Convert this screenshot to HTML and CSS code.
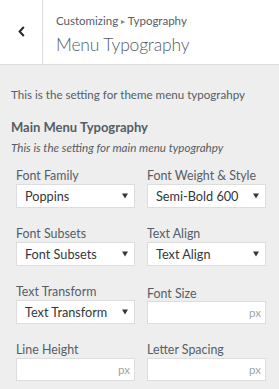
FILE: index.html
```html
<!DOCTYPE html>
<html>
<head>
<meta charset="utf-8">
<link rel="stylesheet" href="styles.css">
</head>
<body>
<div class="header">
  <div class="back">
    <svg width="7" height="11" viewBox="0 0 7 11"><path d="M5.8 1 L1.6 5.5 L5.8 10" fill="none" stroke="#23282d" stroke-width="2"/></svg>
  </div>
  <div class="titles">
    <div class="crumb">Customizing <span class="sep">&#9656;</span> Typography</div>
    <div class="title">Menu Typography</div>
  </div>
</div>
<div class="content">
  <p class="desc">This is the setting for theme menu typograhpy</p>
  <h3 class="section-title">Main Menu Typography</h3>
  <p class="section-desc">This is the setting for main menu typograhpy</p>
  <div class="grid">
    <div class="field">
      <div class="label">Font Family</div>
      <div class="select"><span>Poppins</span><svg class="arrow" width="6" height="6" viewBox="0 0 6 6"><polygon points="0,0.5 6,0.5 3,5.5" fill="#32373c"/></svg></div>
    </div>
    <div class="field">
      <div class="label">Font Weight &amp; Style</div>
      <div class="select"><span>Semi-Bold 600</span><svg class="arrow" width="6" height="6" viewBox="0 0 6 6"><polygon points="0,0.5 6,0.5 3,5.5" fill="#32373c"/></svg></div>
    </div>
    <div class="field">
      <div class="label">Font Subsets</div>
      <div class="select"><span>Font Subsets</span><svg class="arrow" width="6" height="6" viewBox="0 0 6 6"><polygon points="0,0.5 6,0.5 3,5.5" fill="#32373c"/></svg></div>
    </div>
    <div class="field">
      <div class="label">Text Align</div>
      <div class="select"><span>Text Align</span><svg class="arrow" width="6" height="6" viewBox="0 0 6 6"><polygon points="0,0.5 6,0.5 3,5.5" fill="#32373c"/></svg></div>
    </div>
    <div class="field">
      <div class="label">Text Transform</div>
      <div class="select"><span>Text Transform</span><svg class="arrow" width="6" height="6" viewBox="0 0 6 6"><polygon points="0,0.5 6,0.5 3,5.5" fill="#32373c"/></svg></div>
    </div>
    <div class="field field-input">
      <div class="label">Font Size</div>
      <div class="input"><span class="unit">px</span></div>
    </div>
    <div class="field">
      <div class="label">Line Height</div>
      <div class="input"><span class="unit">px</span></div>
    </div>
    <div class="field">
      <div class="label">Letter Spacing</div>
      <div class="input"><span class="unit">px</span></div>
    </div>
  </div>
</div>
</body>
</html>
```
FILE: styles.css
```css
* { box-sizing: border-box; }
html, body { margin: 0; padding: 0; }
body {
  width: 279px;
  height: 389px;
  background: #eeeeee;
  font-family: Lato, "Liberation Sans", sans-serif;
  color: #555d66;
  overflow: hidden;
}
.header {
  display: flex;
  height: 65px;
  background: #fff;
  border-bottom: 1px solid #dddddd;
}
.back {
  width: 43px;
  border-right: 1px solid #dddddd;
  display: flex;
  align-items: center;
  justify-content: center;
  padding-bottom: 2px;
}
.titles {
  padding: 14px 0 0 13px;
}
.crumb {
  font-size: 11.5px;
  line-height: 14px;
  color: #555d66;
}
.sep { font-size: 8px; position: relative; top: -1px; color: #82878c; }
.title {
  font-size: 17.5px;
  font-weight: 300;
  letter-spacing: -0.2px;
  line-height: 22px;
  margin-top: 5px;
  color: #555d66;
}
.content {
  padding: 22px 11px 0 11px;
}
.desc {
  margin: 0;
  font-size: 11.6px;
  line-height: 16px;
  color: #555d66;
}
.section-title {
  margin: 15px 0 0 0;
  font-size: 13px;
  font-weight: 700;
  line-height: 18px;
  color: #555d66;
}
.section-desc {
  margin: 4px 0 0 0;
  font-size: 11.6px;
  font-style: italic;
  line-height: 16px;
  color: #555d66;
}
.grid {
  display: grid;
  grid-template-columns: 119px 119px;
  column-gap: 12px;
  row-gap: 19px;
  margin: 13px 0 0 5px;
}
.label {
  font-size: 12.4px;
  line-height: 14px;
  margin-bottom: 1px;
  color: #555d66;
}
.field-input .label { margin-top: 2px; margin-bottom: 0; }
.select, .input {
  height: 24px;
  background: #fff;
  border: 1px solid #dddddd;
  display: flex;
  align-items: center;
  justify-content: space-between;
  padding: 0 6px 0 8px;
  font-size: 12.7px;
  color: #32373c;
}
.input { justify-content: flex-end; padding-right: 4px; height: 23px; }
.unit { font-size: 11.5px; color: #a0a5aa; }
```
